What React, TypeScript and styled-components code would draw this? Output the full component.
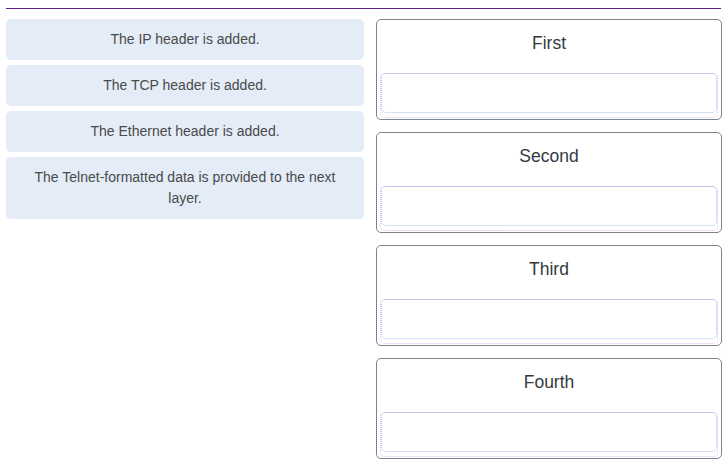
import React from "react";
import styled, { createGlobalStyle } from "styled-components";

const GlobalStyle = createGlobalStyle`
  html, body {
    margin: 0;
    padding: 0;
    background: #ffffff;
    font-family: "Liberation Sans", Arial, sans-serif;
  }
`;

const Page = styled.div`
  padding: 8px 6px 0 6px;
`;

const Rule = styled.hr`
  margin: 0 0 10px 0;
  border: none;
  height: 1px;
  background: #5f1c8c;
`;

const Columns = styled.div`
  display: grid;
  grid-template-columns: 358px 346px;
  column-gap: 12px;
  align-items: start;
`;

const ItemList = styled.div`
  display: flex;
  flex-direction: column;
  gap: 5px;
`;

const Item = styled.div`
  background: #e4ecf7;
  border-radius: 5px;
  padding: 10px 15px;
  font-size: 14px;
  line-height: 21px;
  color: #4a4a4a;
  text-align: center;
`;

const TargetList = styled.div`
  display: flex;
  flex-direction: column;
  gap: 12px;
`;

const Target = styled.div`
  box-sizing: border-box;
  height: 101px;
  border: 1px solid #7b838b;
  border-radius: 5px;
  padding: 0 3px 1px 3px;
  display: flex;
  flex-direction: column;
`;

const TargetTitle = styled.div`
  padding-top: 10px;
  margin-bottom: 16px;
  font-size: 17.5px;
  line-height: 27px;
  color: #343a40;
  text-align: center;
`;

const DropZone = styled.div`
  flex: 1;
  border: 1px dotted #dcc2ee;
  border-radius: 5px;
  padding: 0 0 4px 0;
  display: flex;
  flex-direction: column;
`;

const Slot = styled.div`
  height: 38px;
  border: 1px dotted #a9c3ea;
  border-radius: 5px;
  margin-top: -1px;
`;

const items = [
  "The IP header is added.",
  "The TCP header is added.",
  "The Ethernet header is added.",
  "The Telnet-formatted data is provided to the next layer.",
];

const targets = ["First", "Second", "Third", "Fourth"];

export default function App() {
  return (
    <>
      <GlobalStyle />
      <Page>
        <Rule />
        <Columns>
          <ItemList>
            {items.map((t) => (
              <Item key={t}>{t}</Item>
            ))}
          </ItemList>
          <TargetList>
            {targets.map((t) => (
              <Target key={t}>
                <TargetTitle>{t}</TargetTitle>
                <DropZone>
                  <Slot />
                </DropZone>
              </Target>
            ))}
          </TargetList>
        </Columns>
      </Page>
    </>
  );
}
